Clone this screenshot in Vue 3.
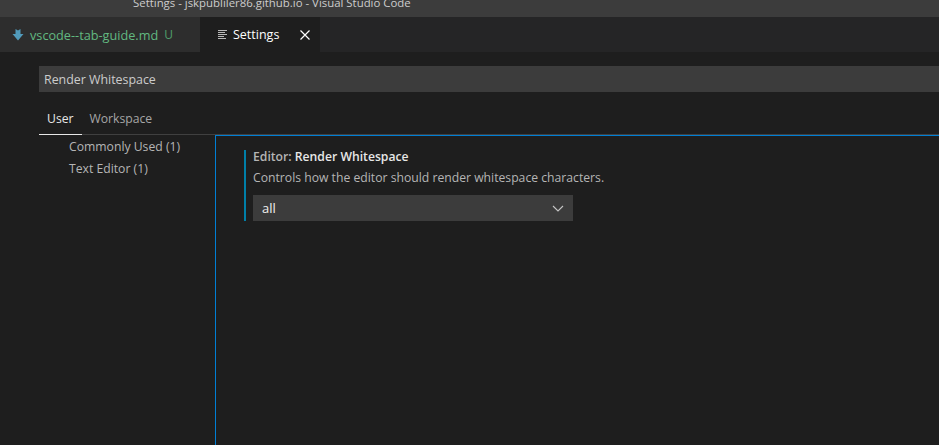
<script setup>
const tocItems = ["Commonly Used (1)", "Text Editor (1)"];
</script>

<template>
  <div class="window">
    <div class="titlebar">
      <span class="title">Settings - jskpubliler86.github.io - Visual Studio Code</span>
    </div>

    <div class="tabbar">
      <div class="tab file">
        <svg class="md-icon" width="12" height="14" viewBox="0 0 12 14">
          <path d="M3.5 1 L6 2.5 L8.5 1 V6 H11.5 L6 12.5 L0.5 6 H3.5 Z" fill="#519aba" />
        </svg>
        <span class="tab-name">vscode--tab-guide.md</span>
        <span class="tab-status">U</span>
      </div>
      <div class="tab active">
        <svg class="lines-icon" width="10" height="11" viewBox="0 0 10 11">
          <path d="M0 1.5 H9 M0 3.5 H7 M0 5.5 H9 M0 7.5 H6 M0 9.5 H8" stroke="#b8b8b8" stroke-width="1" fill="none" />
        </svg>
        <span class="tab-name">Settings</span>
        <svg class="close-icon" width="10" height="10" viewBox="0 0 10 10">
          <path d="M0.5 0.5 L9.5 9.5 M9.5 0.5 L0.5 9.5" stroke="#ffffff" stroke-width="1.2" fill="none" />
        </svg>
      </div>
    </div>

    <div class="editor">
      <div class="search">Render Whitespace</div>

      <div class="scopes">
        <span class="scope current">User</span>
        <span class="scope">Workspace</span>
      </div>

      <div class="body">
        <ul class="toc">
          <li v-for="item in tocItems" :key="item">{{ item }}</li>
        </ul>
        <div class="settings">
          <div class="setting">
            <div class="setting-title">Editor: <b>Render Whitespace</b></div>
            <div class="setting-desc">Controls how the editor should render whitespace characters.</div>
            <div class="select">
              <span>all</span>
              <svg width="12" height="7" viewBox="0 0 12 7">
                <path d="M1 1 L6 6 L11 1" stroke="#c5c5c5" stroke-width="1.1" fill="none" />
              </svg>
            </div>
          </div>
        </div>
      </div>
    </div>
  </div>
</template>

<style>
html,
body {
  margin: 0;
  background: #1e1e1e;
}
</style>

<style scoped>
.window {
  display: flex;
  flex-direction: column;
  width: 939px;
  height: 445px;
  overflow: hidden;
  background: #1e1e1e;
  color: #cccccc;
  font-family: "Open Sans", "Noto Sans", sans-serif;
  font-size: 13px;
}

.titlebar {
  height: 17px;
  flex: none;
  background: #3c3c3c;
  color: #cccccc;
  font-size: 11.4px;
  line-height: 6px;
  padding-left: 133px;
  overflow: hidden;
}

.tabbar {
  display: flex;
  height: 35px;
  flex: none;
  background: #252526;
}

.tab {
  display: flex;
  align-items: center;
  height: 35px;
}

.file {
  width: 200px;
  padding-left: 12px;
  box-sizing: border-box;
  background: #2d2d2d;
  color: #62b981;
  font-size: 12.7px;
}

.md-icon {
  margin-right: 6px;
}

.tab-status {
  margin-left: 6px;
  font-size: 12px;
  color: #4f9e6a;
}

.active {
  width: 120px;
  padding-left: 18px;
  box-sizing: border-box;
  background: #1e1e1e;
  color: #ffffff;
  font-size: 12.5px;
}

.lines-icon {
  margin-right: 5px;
}

.close-icon {
  margin-left: auto;
  margin-right: 10px;
}

.editor {
  flex: 1;
  display: flex;
  flex-direction: column;
  padding: 14px 0 0;
  min-height: 0;
}

.search {
  height: 26px;
  line-height: 28px;
  margin-left: 39px;
  padding-left: 5px;
  background: #3c3c3c;
  color: #cccccc;
  font-size: 12.4px;
}

.scopes {
  display: flex;
  height: 43px;
  flex: none;
  box-sizing: border-box;
  margin-left: 39px;
  border-bottom: 1px solid #404040;
}

.scope {
  height: 43px;
  line-height: 53px;
  padding: 0 8px;
  box-sizing: border-box;
  color: #a6a6a6;
  font-size: 12.2px;
}

.current {
  color: #e7e7e7;
  border-bottom: 1px solid #e7e7e7;
}

.body {
  flex: 1;
  display: flex;
  min-height: 0;
}

.toc {
  width: 215px;
  flex: none;
  margin: 0;
  padding: 1px 0 0 69px;
  box-sizing: border-box;
  list-style: none;
  font-size: 12.2px;
  line-height: 22px;
  color: #b5b5b5;
}

.settings {
  flex: 1;
  border-top: 1px solid #007fd4;
  border-left: 1px solid #007fd4;
  padding: 14px 0 0 28px;
}

.setting {
  border-left: 2px solid #007fa8;
  padding-left: 7px;
  height: 71px;
  box-sizing: border-box;
}

.setting-title {
  font-size: 12.2px;
  font-weight: 600;
  color: #b5b5b5;
  line-height: 14px;
}

.setting-title b {
  font-weight: 600;
  color: #e7e7e7;
}

.setting-desc {
  font-size: 12.2px;
  line-height: 18px;
  margin-top: 5px;
  color: #b5b5b5;
}

.select {
  display: flex;
  align-items: center;
  justify-content: space-between;
  width: 320px;
  height: 26px;
  margin-top: 8px;
  padding: 0 9px;
  box-sizing: border-box;
  background: #3c3c3c;
  color: #f0f0f0;
}
</style>
